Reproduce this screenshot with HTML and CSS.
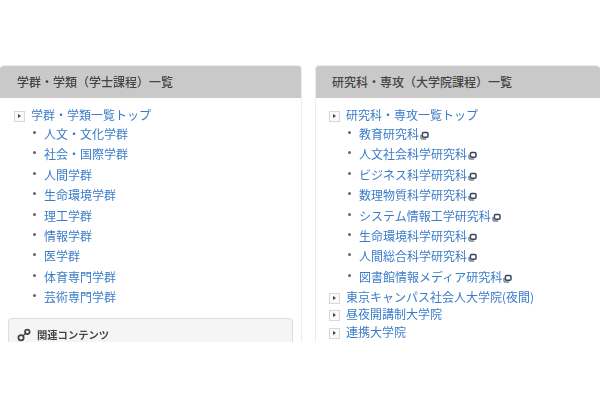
FILE: index.html
```html
<!DOCTYPE html>
<html lang="ja">
<head>
  <meta charset="UTF-8" />
  <title>学群・学類一覧</title>
  <link rel="stylesheet" href="styles.css">
</head>
<body>
  <svg class="icon-defs" width="0" height="0">
    <defs>
      <symbol id="ext" viewBox="0 0 9 9">
        <rect x="2.4" y="1.6" width="5.6" height="4.6" rx="1.2" fill="none" stroke="#36465c" stroke-width="1.5"/>
        <path d="M1 4v3.2c0 .5.3.8.8.8h4.4" fill="none" stroke="#36465c" stroke-width="1"/>
      </symbol>
    </defs>
  </svg>
  <div class="container">
    <div class="panel panel-left">
      <h2 class="panel-title">学群・学類（学士課程）一覧</h2>
      <ul class="tree">
        <li class="top"><a href="#">学群・学類一覧トップ</a>
          <ul class="sub">
            <li><a href="#">人文・文化学群</a></li>
            <li><a href="#">社会・国際学群</a></li>
            <li><a href="#">人間学群</a></li>
            <li><a href="#">生命環境学群</a></li>
            <li><a href="#">理工学群</a></li>
            <li><a href="#">情報学群</a></li>
            <li><a href="#">医学群</a></li>
            <li><a href="#">体育専門学群</a></li>
            <li><a href="#">芸術専門学群</a></li>
          </ul>
        </li>
      </ul>
      <div class="related">
        <svg class="link-icon" viewBox="0 0 16 16">
          <circle cx="4.6" cy="11.2" r="3" fill="none" stroke="#444" stroke-width="2"/>
          <circle cx="11.8" cy="4.4" r="2.6" fill="none" stroke="#444" stroke-width="2"/>
          <path d="M7 9l2.6-2.6" stroke="#444" stroke-width="1.6"/>
        </svg>
        <span>関連コンテンツ</span>
      </div>
    </div>
    <div class="panel panel-right">
      <h2 class="panel-title">研究科・専攻（大学院課程）一覧</h2>
      <ul class="tree">
        <li class="top"><a href="#">研究科・専攻一覧トップ</a>
          <ul class="sub">
            <li><a href="#">教育研究科</a><svg class="ext"><use href="#ext"/></svg></li>
            <li><a href="#">人文社会科学研究科</a><svg class="ext"><use href="#ext"/></svg></li>
            <li><a href="#">ビジネス科学研究科</a><svg class="ext"><use href="#ext"/></svg></li>
            <li><a href="#">数理物質科学研究科</a><svg class="ext"><use href="#ext"/></svg></li>
            <li><a href="#">システム情報工学研究科</a><svg class="ext"><use href="#ext"/></svg></li>
            <li><a href="#">生命環境科学研究科</a><svg class="ext"><use href="#ext"/></svg></li>
            <li><a href="#">人間総合科学研究科</a><svg class="ext"><use href="#ext"/></svg></li>
            <li><a href="#">図書館情報メディア研究科</a><svg class="ext"><use href="#ext"/></svg></li>
          </ul>
        </li>
        <li class="top"><a href="#">東京キャンパス社会人大学院(夜間)</a></li>
        <li class="top"><a href="#">昼夜開講制大学院</a></li>
        <li class="top"><a href="#">連携大学院</a></li>
      </ul>
    </div>
  </div>
</body>
</html>
```

FILE: styles.css
```css
html, body {
  margin: 0;
  padding: 0;
  background: #fff;
  font-family: "Noto Sans CJK JP", "Liberation Sans", sans-serif;
  font-size: 12px;
  overflow: hidden;
}
.icon-defs {
  position: absolute;
}
.container {
  display: flex;
  gap: 13px;
  height: 277px;
  margin-top: 65px;
  overflow: hidden;
  filter: blur(0.5px);
}
.panel {
  box-sizing: border-box;
  height: 277px;
  overflow: hidden;
  border: 1px solid #ececec;
  border-bottom: none;
  border-radius: 4px 4px 0 0;
}
.panel-left {
  width: 302px;
  border-left: none;
}
.panel-right {
  width: 285px;
  border-right: none;
}
.panel-title {
  margin: 0;
  height: 32px;
  line-height: 31px;
  background: #c9c9c9;
  color: #444;
  font-size: 12px;
  font-weight: 500;
}
.panel-left .panel-title {
  padding-left: 17px;
}
.panel-right .panel-title {
  padding-left: 16px;
}
a {
  color: #3b7cc9;
  text-decoration: none;
}
.tree, .sub {
  list-style: none;
  margin: 0;
  padding: 0;
}
.tree {
  padding-top: 8px;
}
.top {
  position: relative;
  padding-left: 31px;
  line-height: 17.5px;
}
.panel-right .top {
  padding-left: 30px;
}
.top::before {
  content: "";
  position: absolute;
  left: 14px;
  top: 5px;
  width: 9px;
  height: 9px;
  border: 1px solid #d8d8d8;
  background: #fafafa;
}
.top::after {
  content: "";
  position: absolute;
  left: 18px;
  top: 8px;
  border-left: 3px solid #444;
  border-top: 2px solid transparent;
  border-bottom: 2px solid transparent;
}
.panel-right .top::before {
  left: 13px;
}
.panel-right .top::after {
  left: 17px;
}
.sub {
  margin-left: -31px;
  margin-top: 0.5px;
  margin-bottom: 0.5px;
  padding-left: 44px;
}
.panel-right .sub {
  margin-left: -30px;
  padding-left: 43px;
}
.sub li {
  position: relative;
  height: 20.4px;
  line-height: 20px;
}
.sub li::before {
  content: "";
  position: absolute;
  left: -11px;
  top: 7px;
  width: 3px;
  height: 3px;
  border-radius: 50%;
  background: #666;
}
.ext {
  width: 9px;
  height: 9px;
  margin-left: 1px;
  vertical-align: -1px;
}
.related {
  display: flex;
  align-items: flex-start;
  gap: 6px;
  box-sizing: border-box;
  height: 60px;
  margin: 10px 8px 0;
  padding: 8px 8px 0;
  background: #f5f5f5;
  border: 1px solid #dcdcdc;
  border-radius: 4px;
  color: #444;
  font-size: 10.3px;
  font-weight: 700;
}
.link-icon {
  width: 14px;
  height: 14px;
  margin-top: 1px;
}
```
